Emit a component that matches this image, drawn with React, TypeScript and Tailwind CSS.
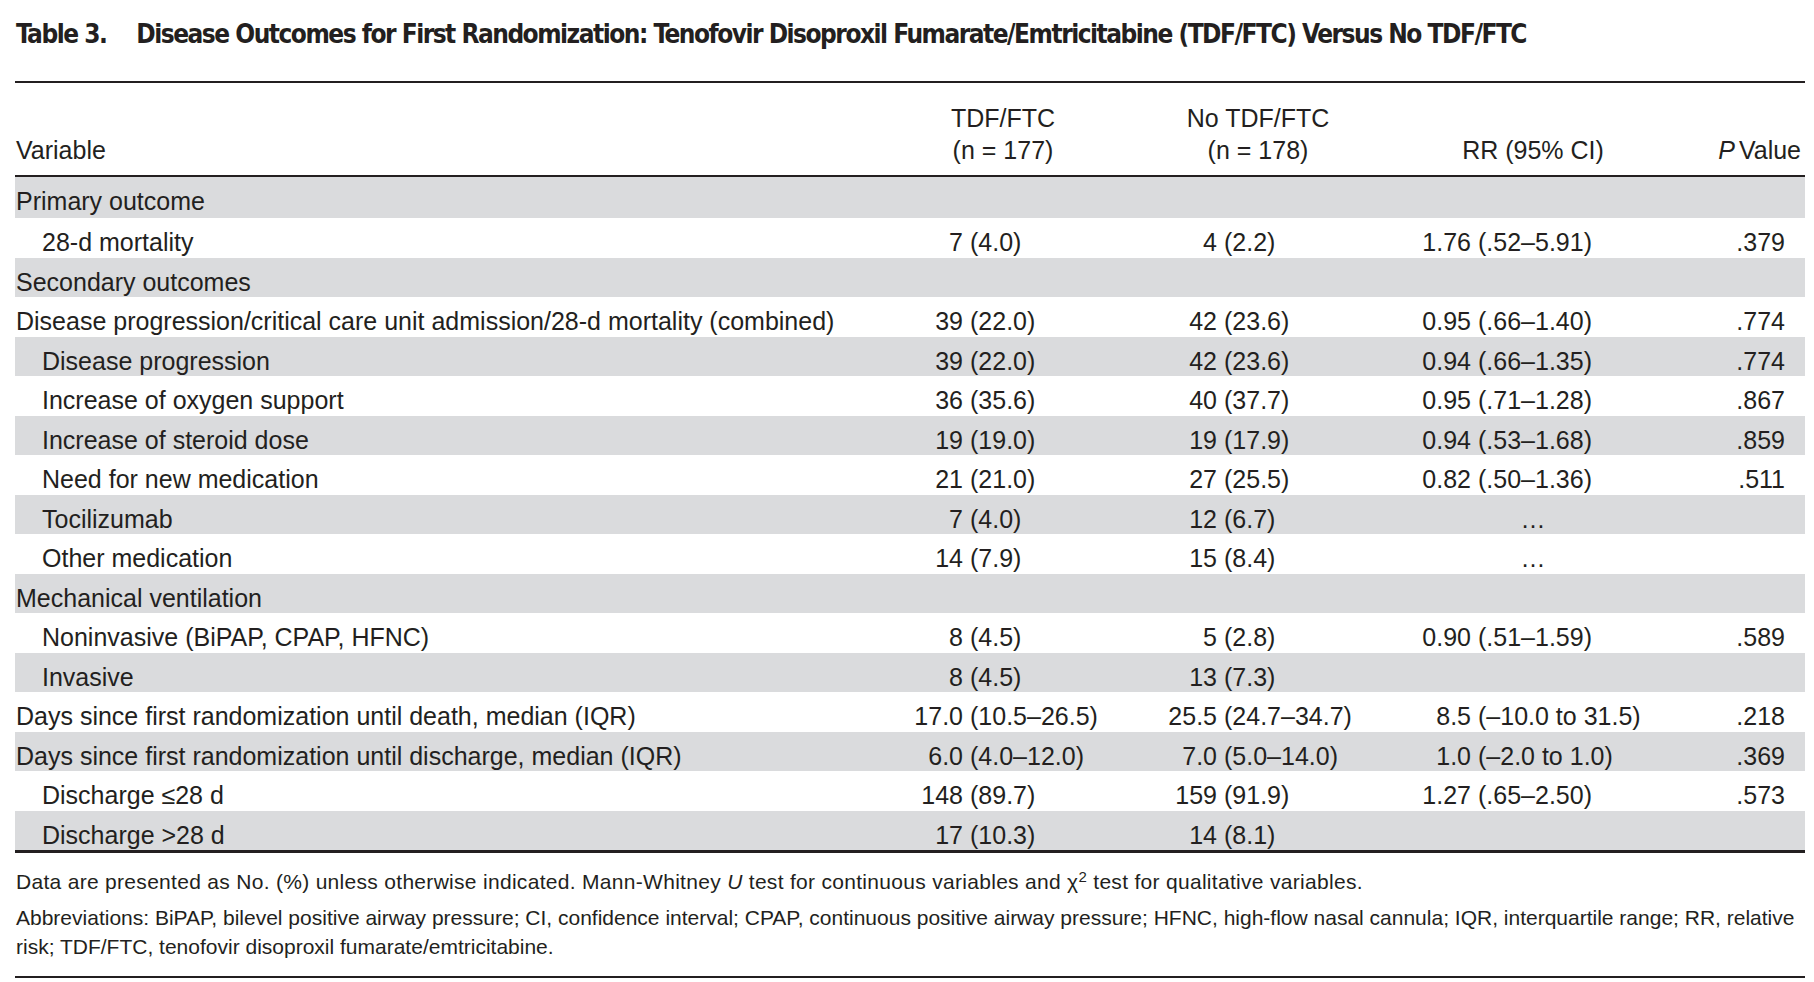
import React from "react";

type Row = {
  label: string;
  indent?: boolean;
  a?: string;
  b?: string;
  rr?: string;
  p?: string;
};

const rows: Row[] = [
  { label: "Primary outcome" },
  { label: "28-d mortality", indent: true, a: "7 (4.0)", b: "4 (2.2)", rr: "1.76 (.52–5.91)", p: ".379" },
  { label: "Secondary outcomes" },
  {
    label: "Disease progression/critical care unit admission/28-d mortality (combined)",
    a: "39 (22.0)",
    b: "42 (23.6)",
    rr: "0.95 (.66–1.40)",
    p: ".774",
  },
  { label: "Disease progression", indent: true, a: "39 (22.0)", b: "42 (23.6)", rr: "0.94 (.66–1.35)", p: ".774" },
  { label: "Increase of oxygen support", indent: true, a: "36 (35.6)", b: "40 (37.7)", rr: "0.95 (.71–1.28)", p: ".867" },
  { label: "Increase of steroid dose", indent: true, a: "19 (19.0)", b: "19 (17.9)", rr: "0.94 (.53–1.68)", p: ".859" },
  { label: "Need for new medication", indent: true, a: "21 (21.0)", b: "27 (25.5)", rr: "0.82 (.50–1.36)", p: ".511" },
  { label: "Tocilizumab", indent: true, a: "7 (4.0)", b: "12 (6.7)", rr: "…" },
  { label: "Other medication", indent: true, a: "14 (7.9)", b: "15 (8.4)", rr: "…" },
  { label: "Mechanical ventilation" },
  { label: "Noninvasive (BiPAP, CPAP, HFNC)", indent: true, a: "8 (4.5)", b: "5 (2.8)", rr: "0.90 (.51–1.59)", p: ".589" },
  { label: "Invasive", indent: true, a: "8 (4.5)", b: "13 (7.3)" },
  {
    label: "Days since first randomization until death, median (IQR)",
    a: "17.0 (10.5–26.5)",
    b: "25.5 (24.7–34.7)",
    rr: "8.5 (–10.0 to 31.5)",
    p: ".218",
  },
  {
    label: "Days since first randomization until discharge, median (IQR)",
    a: "6.0 (4.0–12.0)",
    b: "7.0 (5.0–14.0)",
    rr: "1.0 (–2.0 to 1.0)",
    p: ".369",
  },
  { label: "Discharge ≤28 d", indent: true, a: "148 (89.7)", b: "159 (91.9)", rr: "1.27 (.65–2.50)", p: ".573" },
  { label: "Discharge >28 d", indent: true, a: "17 (10.3)", b: "14 (8.1)" },
];

// numbers line up on the opening paren
function Num({ v, lead }: { v?: string; lead: string }) {
  if (!v) return <div />;
  if (v === "…") return <div className="flex items-center justify-center">…</div>;
  const i = v.indexOf(" (");
  return (
    <div className="flex items-center whitespace-nowrap">
      <span className={`${lead} text-right pr-[7px] shrink-0`}>{v.slice(0, i)}</span>
      <span>{v.slice(i + 1)}</span>
    </div>
  );
}

export default function App() {
  return (
    <div className="w-[1814px] h-[982px] bg-white text-[#231f20] overflow-hidden" style={{ fontFamily: '"Liberation Sans", Arial, sans-serif' }}>
      <div className="ml-[15px] w-[1790px]">
        <div className="h-[81px] pt-[19px] pl-[1px]">
          <h1
            className="text-[26px] leading-[30px] font-bold whitespace-nowrap tracking-[-1.5px]"
            style={{ fontFamily: '"DejaVu Sans Condensed", "Liberation Sans", sans-serif' }}
          >
            <span className="mr-[30px]">Table 3.</span>
            Disease Outcomes for First Randomization: Tenofovir Disoproxil Fumarate/Emtricitabine (TDF/FTC) Versus No TDF/FTC
          </h1>
        </div>
        <div className="h-[2px] bg-[#231f20]" />

        <div className="grid grid-cols-[861px_254px_256px_294px_125px] h-[92px] pt-[19px] pb-[9px] text-[25px] leading-[32px]">
          <div className="flex items-end pl-[1px]">Variable</div>
          <div className="text-center">
            <div>TDF/FTC</div>
            <div>(n = 177)</div>
          </div>
          <div className="text-center">
            <div>No TDF/FTC</div>
            <div>(n = 178)</div>
          </div>
          <div className="flex items-end justify-center">RR (95% CI)</div>
          <div className="flex items-end justify-end pr-[4px]">
            <span className="italic mr-[4px]">P</span>Value
          </div>
        </div>
        <div className="h-[2px] bg-[#231f20]" />

        <div className="text-[25px]">
          {rows.map((r, idx) => (
            <div
              key={idx}
              className={`grid grid-cols-[861px_254px_256px_294px_125px] pt-[6px] ${idx === 0 ? "h-[41px]" : "h-[39.5px]"} ${
                idx % 2 === 0 ? "bg-[#dadbdd]" : "bg-white"
              }`}
            >
              <div className={`flex items-center whitespace-nowrap ${r.indent ? "pl-[27px]" : "pl-[1px]"}`}>{r.label}</div>
              <Num v={r.a} lead="w-[94px]" />
              <Num v={r.b} lead="w-[94px]" />
              <Num v={r.rr} lead="w-[92px]" />
              <div className="flex items-center justify-end pr-[20px]">{r.p}</div>
            </div>
          ))}
        </div>
        <div className="h-[3px] bg-[#231f20]" />

        <div className="text-[21px] leading-[29px] pl-[1px]">
          <p className="mt-[14px] whitespace-nowrap tracking-[0.3px]">
            Data are presented as No. (%) unless otherwise indicated. Mann-Whitney <span className="italic">U</span> test for
            continuous variables and χ<sup className="text-[15px]">2</sup> test for qualitative variables.
          </p>
          <p className="mt-[7px] whitespace-nowrap">
            Abbreviations: BiPAP, bilevel positive airway pressure; CI, confidence interval; CPAP, continuous positive airway
            pressure; HFNC, high-flow nasal cannula; IQR, interquartile range; RR, relative
            <br />
            risk; TDF/FTC, tenofovir disoproxil fumarate/emtricitabine.
          </p>
        </div>
        <div className="h-[2px] bg-[#231f20] mt-[15px]" />
      </div>
    </div>
  );
}
